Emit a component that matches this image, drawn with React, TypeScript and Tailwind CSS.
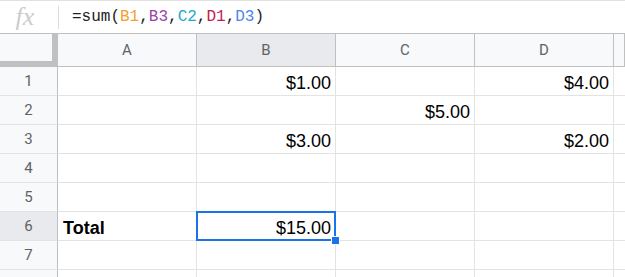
import React from 'react';

const cols = ['A', 'B', 'C', 'D'];

// row -> column -> value
const values: Record<number, Record<string, string>> = {
  1: { B: '$1.00', D: '$4.00' },
  2: { C: '$5.00' },
  3: { B: '$3.00', D: '$2.00' },
  6: { B: '$15.00' },
};

const FormulaBar = () => (
  <div className="flex h-[34px] items-center border-t border-b border-[#e1e1e1] border-b-[#c0c0c0] bg-white">
    <div className="flex w-[58px] items-center justify-center">
      <span className="pr-[8px] font-['Liberation_Serif',serif] text-[26px] italic leading-none text-[#cccccc]">
        fx
      </span>
    </div>
    <div className="h-[23px] w-px bg-[#dadce0]" />
    <div className="pl-[13px] font-['Liberation_Mono',monospace] text-[16px] text-[#202124]">
      =sum(<span className="text-[#f6a02d]">B1</span>,<span className="text-[#9c44a8]">B3</span>,<span className="text-[#22a9cd]">C2</span>,<span className="text-[#c4204f]">D1</span>,<span className="text-[#4a86ee]">D3</span>)
    </div>
  </div>
);

export default function App() {
  const selCol = 'B';
  const selRow = 6;

  return (
    <div className="h-[277px] w-[625px] overflow-hidden bg-white font-['Liberation_Sans',Arial,sans-serif]">
      <FormulaBar />
      <div className="grid grid-cols-[58px_139px_139px_139px_139px_1fr]">
        {/* header row */}
        <div className="h-[33px] border-r-[6px] border-b-[6px] border-[#c0c0c0] bg-[#f8f9fa]" />
        {[...cols, 'E'].map((c) => (
          <div
            key={c}
            className={`flex h-[33px] items-center justify-center border-r border-b border-[#c0c0c0] font-['Roboto',sans-serif] text-[15px] text-[#5f6368] ${
              c === selCol ? 'bg-[#e8eaed]' : 'bg-[#f8f9fa]'
            }`}
          >
            {c === 'E' ? '' : c}
          </div>
        ))}

        {[1, 2, 3, 4, 5, 6, 7, 8].map((r) => (
          <React.Fragment key={r}>
            <div
              className={`flex h-[29px] items-center justify-center border-r border-b border-r-[#c0c0c0] border-b-[#e2e3e3] font-['Roboto',sans-serif] text-[15px] text-[#5f6368] ${
                r === selRow ? 'bg-[#e8eaed]' : 'bg-[#f8f9fa]'
              }`}
            >
              {r < 8 ? r : ''}
            </div>
            {cols.map((c) => {
              const v = values[r]?.[c];
              const selected = r === selRow && c === selCol;
              return (
                <div
                  key={c}
                  className={`relative flex h-[29px] items-end justify-end border-r border-b border-[#e2e3e3] pr-[4px] pb-[1px] text-[18px] leading-[21px] text-black ${
                    selected ? 'z-10' : ''
                  }`}
                >
                  {r === 6 && c === 'A' ? (
                    <span className="mr-auto pl-[5px] font-bold">Total</span>
                  ) : (
                    v
                  )}
                  {selected && (
                    <>
                      <div className="absolute -top-px -left-px -right-px -bottom-px border-2 border-[#1a73e8]" />
                      <div className="absolute -right-[5px] -bottom-[5px] h-[9px] w-[9px] border border-white bg-[#1a73e8]" />
                    </>
                  )}
                </div>
              );
            })}
            <div className="h-[29px] border-b border-[#e2e3e3]" />
          </React.Fragment>
        ))}
      </div>
    </div>
  );
}
